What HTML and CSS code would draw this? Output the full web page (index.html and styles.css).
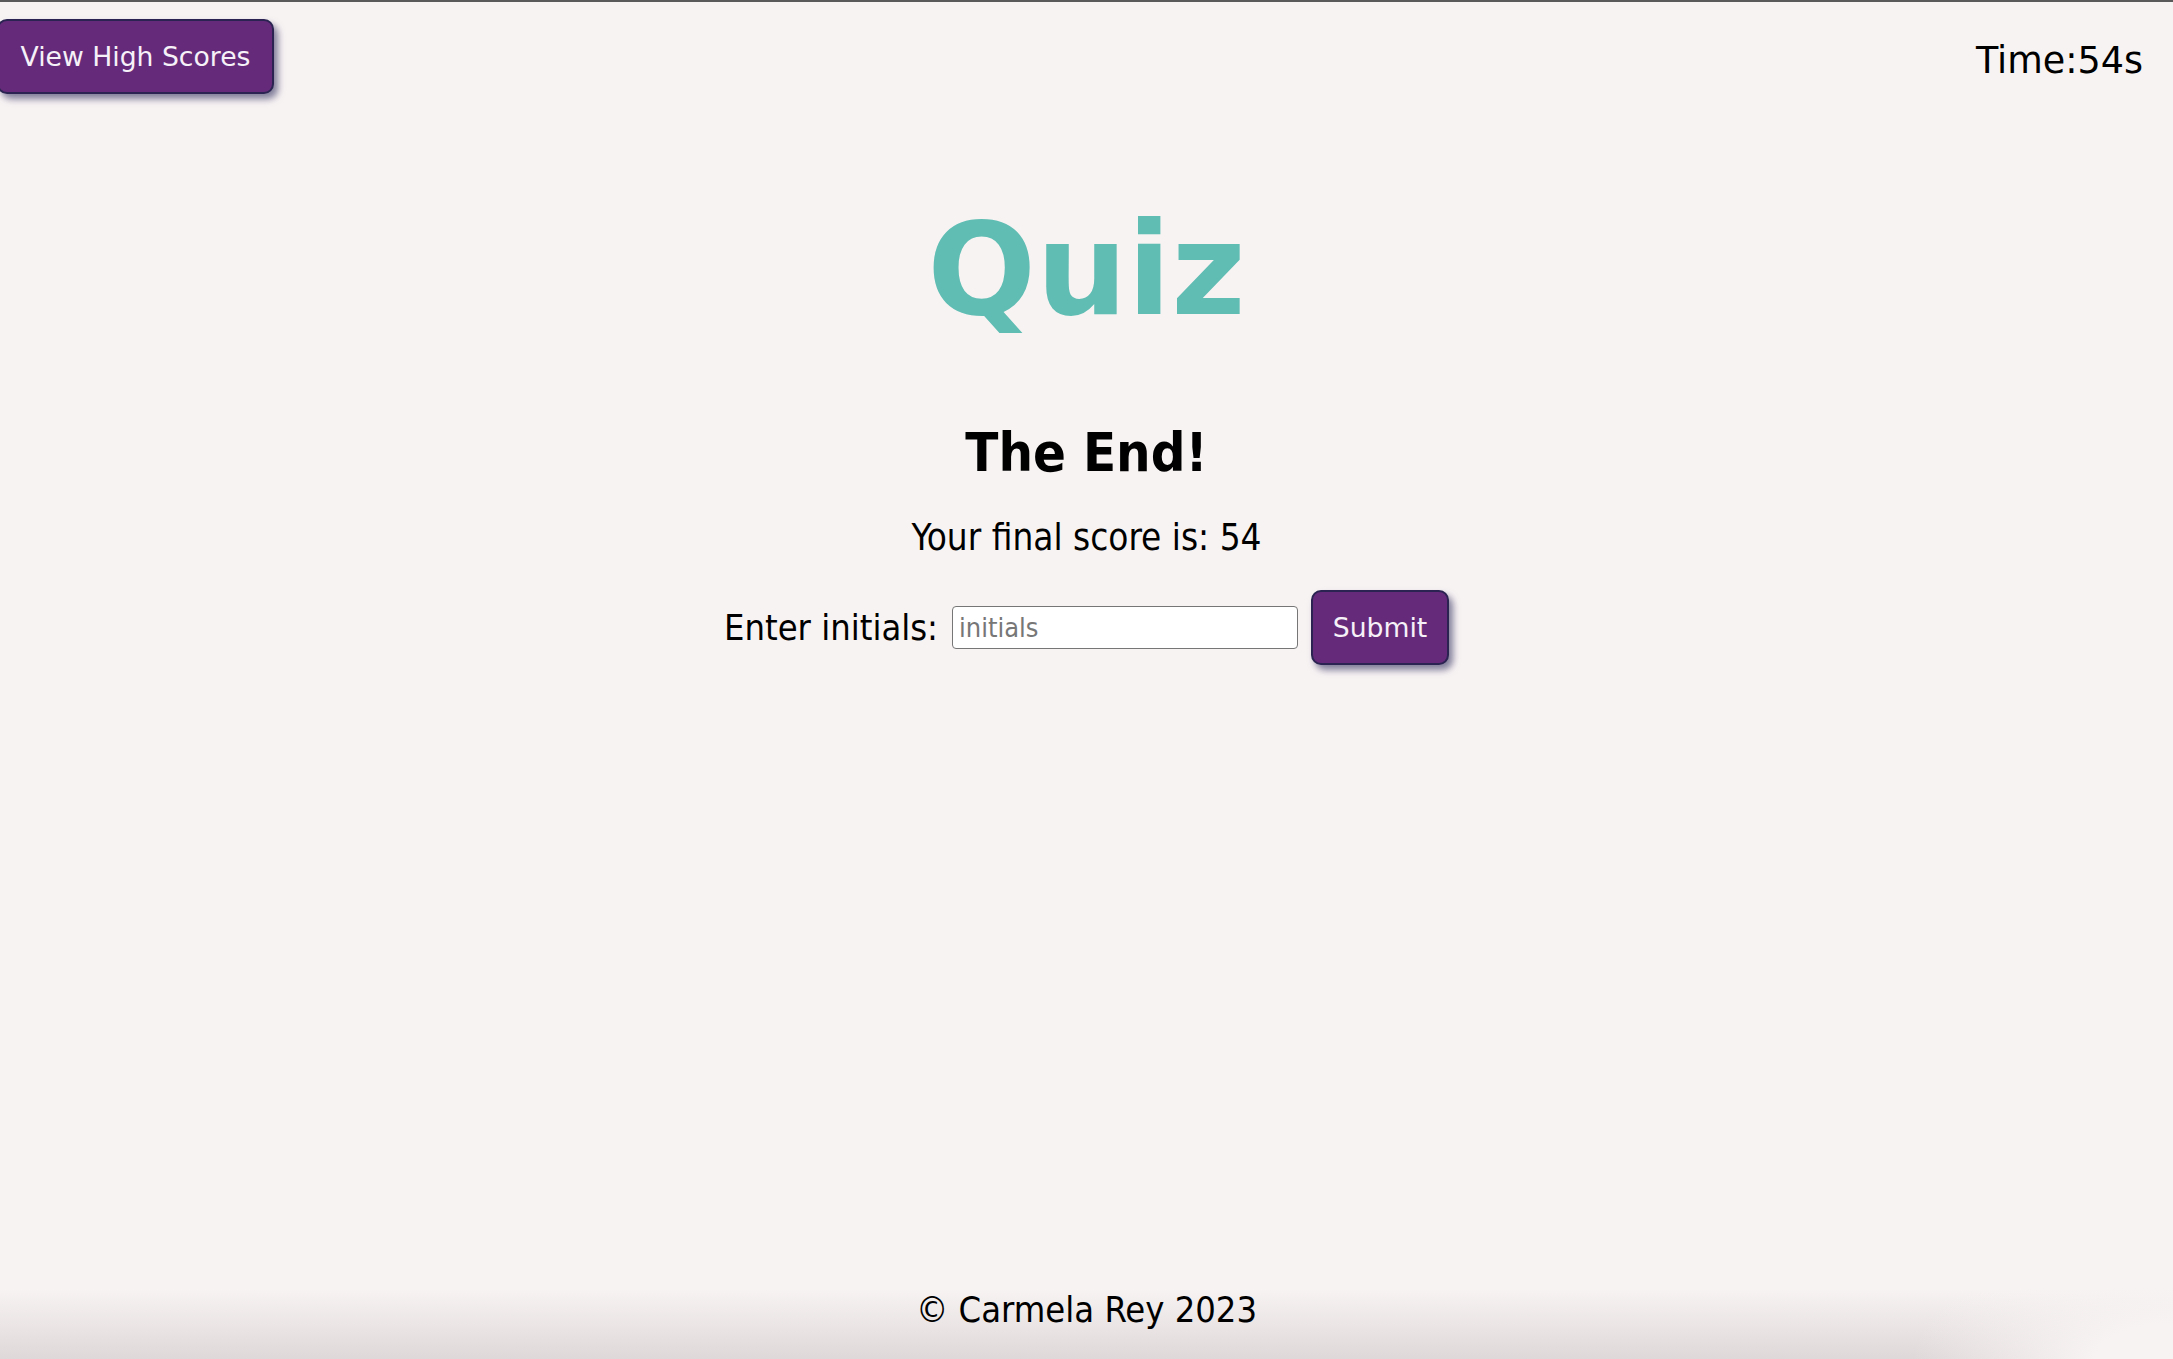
FILE: index.html
```html
<!DOCTYPE html>
<html lang="en">
<head>
<meta charset="utf-8">
<title>Quiz</title>
<link rel="stylesheet" href="styles.css">
</head>
<body>
<div class="page">
  <header class="topbar">
    <button class="btn btn-scores" type="button">View High Scores</button>
    <div class="timer">Time:54s</div>
  </header>
  <main class="content">
    <h1 class="title">Quiz</h1>
    <h2 class="end-title">The End!</h2>
    <p class="score">Your final score is: 54</p>
    <form class="initials-row">
      <label class="initials-label" for="initials">Enter initials:</label>
      <input class="initials-input" id="initials" type="text" placeholder="initials">
      <button class="btn btn-submit" type="button">Submit</button>
    </form>
  </main>
  <footer class="footer">
    <p class="copyright">© Carmela Rey 2023</p>
  </footer>
</div>
</body>
</html>
```
FILE: styles.css
```css
html, body {
  margin: 0;
  padding: 0;
  height: 100%;
}

body {
  background: #f8f3f3;
  font-family: "DejaVu Sans Condensed", "DejaVu Sans", sans-serif;
  color: #000;
  overflow: hidden;
}

.page {
  min-height: 100vh;
  display: flex;
  flex-direction: column;
  border-top: 2px solid #5a5a5a;
  box-sizing: border-box;
}

.topbar {
  display: flex;
  justify-content: space-between;
  align-items: flex-start;
  padding-top: 17px;
}

.btn {
  font-family: "DejaVu Sans", sans-serif;
  font-size: 26.67px;
  line-height: 31px;
  color: #f6f1f8;
  background: #652b7a;
  border: 2px solid #2b2452;
  border-radius: 10px;
  padding: 20px 20px;
  box-shadow: 4px 5px 7px rgba(30, 28, 80, 0.55);
  cursor: pointer;
}

.btn-scores {
  margin-left: -3px;
  width: 277px;
}

.timer {
  font-family: "DejaVu Sans", sans-serif;
  font-size: 36.5px;
  line-height: 36px;
  margin-top: 24px;
  margin-right: 30px;
}

.content {
  display: flex;
  flex-direction: column;
  align-items: center;
}

.title {
  margin: 112px 0 0;
  font-family: "DejaVu Sans", sans-serif;
  font-weight: bold;
  font-size: 128px;
  line-height: 128px;
  color: #5fbdb3;
}

.end-title {
  margin: 92px 0 0;
  font-weight: bold;
  font-size: 54px;
  line-height: 54px;
}

.score {
  margin: 40px 0 0;
  font-size: 36.6px;
  line-height: 36px;
}

.initials-row {
  margin: 34px 0 0;
  display: flex;
  align-items: center;
}

.initials-label {
  font-size: 36px;
  line-height: 36px;
  margin-right: 14px;
}

.initials-input {
  width: 346px;
  height: 43px;
  box-sizing: border-box;
  border: 1.5px solid #767676;
  border-radius: 4px;
  background: #fff;
  padding: 0 6px;
  font-family: "DejaVu Sans Condensed", "DejaVu Sans", sans-serif;
  font-size: 27px;
  margin-right: 13px;
}

.initials-input::placeholder {
  color: #777;
}

.btn-submit {
  width: 138px;
  padding-left: 0;
  padding-right: 0;
}

.footer {
  margin-top: auto;
  height: 100px;
  display: flex;
  justify-content: center;
  align-items: flex-start;
  position: relative;
  background: linear-gradient(to bottom, rgba(0,0,0,0) 0%, rgba(0,0,0,0) 30%, rgba(40,20,30,0.12) 100%);
}

.footer::after {
  content: "";
  position: absolute;
  right: 0;
  bottom: 0;
  width: 300px;
  height: 100px;
  background: radial-gradient(ellipse 260px 120px at 100% 100%, #f8f3f3 30%, rgba(248,243,243,0) 100%);
}

.copyright {
  margin: 33px 0 0;
  font-size: 36px;
  line-height: 36px;
  position: relative;
  z-index: 1;
}
```
